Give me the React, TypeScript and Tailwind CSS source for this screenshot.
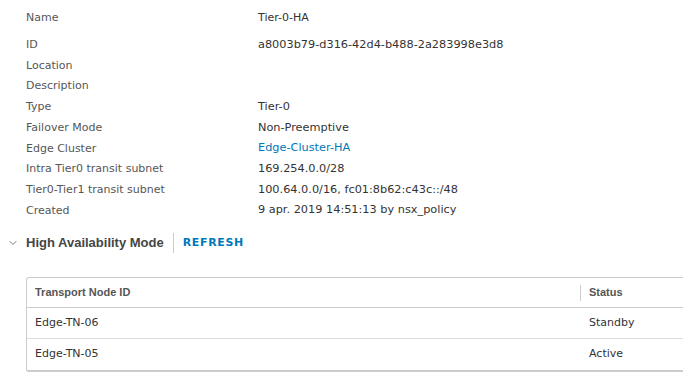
import { ChevronDown } from 'lucide-react';

interface Field {
    label: string;
    value: string;
    link?: boolean;
}

const fields: Field[] = [
    {label: 'ID', value: 'a8003b79-d316-42d4-b488-2a283998e3d8'},
    {label: 'Location', value: ''},
    {label: 'Description', value: ''},
    {label: 'Type', value: 'Tier-0'},
    {label: 'Failover Mode', value: 'Non-Preemptive'},
    {label: 'Edge Cluster', value: 'Edge-Cluster-HA', link: true},
    {label: 'Intra Tier0 transit subnet', value: '169.254.0.0/28'},
    {label: 'Tier0-Tier1 transit subnet', value: '100.64.0.0/16, fc01:8b62:c43c::/48'},
    {label: 'Created', value: '9 apr. 2019 14:51:13 by nsx_policy'},
];

const nodes = [
    {id: 'Edge-TN-06', status: 'Standby'},
    {id: 'Edge-TN-05', status: 'Active'},
];

const App = () => {
    return (
        <div className="w-[683px] h-[375px] overflow-hidden bg-white text-[11px] font-['DejaVu_Sans',sans-serif]">
            <div className="pl-[26px]">
                <div className="flex items-center h-[35px] pt-[1px]">
                    <div className="w-[232px] text-[#565656]">Name</div>
                    <div className="text-[#333]">Tier-0-HA</div>
                </div>
                {fields.map((f) => (
                    <div key={f.label} className="flex items-center h-[20.7px]">
                        <div className="w-[232px] text-[#565656]">{f.label}</div>
                        <div className={f.link ? 'text-[#0079b8] text-[11.3px]' : 'text-[#333] text-[11.3px]'}>{f.value}</div>
                    </div>
                ))}
            </div>

            <div className="flex items-center mt-[11px] h-[22px]">
                <ChevronDown className="ml-[7px] w-[12px] h-[12px] text-[#666]" strokeWidth={1.75}/>
                <div className="ml-[7px] text-[13px] font-bold text-[#454545] font-['Liberation_Sans',sans-serif]">High Availability Mode</div>
                <div className="ml-[9px] w-px h-[20px] bg-[#ccc]"/>
                <button className="ml-[9px] text-[11px] font-bold tracking-[0.06em] text-[#0079b8]">REFRESH</button>
            </div>

            <div className="ml-[26px] mt-[23px] w-[700px] border border-[#ccc] border-b-2 rounded-l-[3px]">
                <div className="flex items-center h-[30px] border-b border-[#ccc] font-bold text-[#565656] font-['Liberation_Sans',sans-serif]">
                    <div className="w-[553px] pl-[8px]">Transport Node ID</div>
                    <div className="w-px h-[16px] bg-[#ccc]"/>
                    <div className="pl-[8px]">Status</div>
                </div>
                {nodes.map((n, i) => (
                    <div key={n.id} className={`flex items-center h-[31px] text-[#333] ${i === 0 ? 'border-b border-[#ddd]' : ''}`}>
                        <div className="w-[554px] pl-[8px]">{n.id}</div>
                        <div className="pl-[8px]">{n.status}</div>
                    </div>
                ))}
            </div>
        </div>
    )
}

export default App;
